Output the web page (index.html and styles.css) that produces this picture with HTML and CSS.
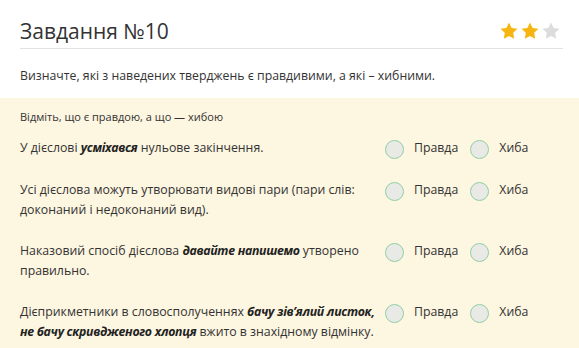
FILE: index.html
```html
<!DOCTYPE html>
<html lang="uk">
<head>
  <meta charset="UTF-8" />
  <title>Завдання №10</title>
  <link rel="stylesheet" href="styles.css">
</head>
<body>
  <div class="task-head">
    <h2>Завдання №10</h2>
    <div class="stars">
      <svg viewBox="0 0 20 20"><path class="on" d="M10 1.5l2.6 5.4 5.9.8-4.3 4.1 1 5.9L10 14.9l-5.2 2.8 1-5.9L1.5 7.7l5.9-.8z"/></svg>
      <svg viewBox="0 0 20 20"><path class="on" d="M10 1.5l2.6 5.4 5.9.8-4.3 4.1 1 5.9L10 14.9l-5.2 2.8 1-5.9L1.5 7.7l5.9-.8z"/></svg>
      <svg viewBox="0 0 20 20"><path class="off" d="M10 1.5l2.6 5.4 5.9.8-4.3 4.1 1 5.9L10 14.9l-5.2 2.8 1-5.9L1.5 7.7l5.9-.8z"/></svg>
    </div>
  </div>

  <p class="task-text">Визначте, які з наведених тверджень є правдивими, а які – хибними.</p>

  <div class="panel">
    <div class="hint">Відміть, що є правдою, а що — хибою</div>

    <div class="row">
      <div class="statement">У дієслові <em>усміхався</em> нульове закінчення.</div>
      <div class="choices">
        <label class="choice"><span class="radio"></span>Правда</label>
        <label class="choice"><span class="radio"></span>Хиба</label>
      </div>
    </div>

    <div class="row">
      <div class="statement">Усі дієслова можуть утворювати видові пари (пари слів: доконаний і недоконаний вид).</div>
      <div class="choices">
        <label class="choice"><span class="radio"></span>Правда</label>
        <label class="choice"><span class="radio"></span>Хиба</label>
      </div>
    </div>

    <div class="row">
      <div class="statement">Наказовий спосіб дієслова <em>давайте напишемо</em> утворено правильно.</div>
      <div class="choices">
        <label class="choice"><span class="radio"></span>Правда</label>
        <label class="choice"><span class="radio"></span>Хиба</label>
      </div>
    </div>

    <div class="row">
      <div class="statement">Дієприкметники в словосполученнях <em>бачу зів’ялий листок, не бачу скривдженого хлопця</em> вжито в знахідному відмінку.</div>
      <div class="choices">
        <label class="choice"><span class="radio"></span>Правда</label>
        <label class="choice"><span class="radio"></span>Хиба</label>
      </div>
    </div>
  </div>
</body>
</html>
```

FILE: styles.css
```css
body {
  margin: 0;
  background-color: #fff;
  font-family: 'Open Sans', sans-serif;
  color: #333;
}
.task-head {
  display: flex;
  align-items: center;
  justify-content: space-between;
  margin: 0 16px 0 20px;
  padding: 16px 0 2px;
  border-bottom: 1px solid #e2e2e2;
}
h2 {
  margin: 0;
  font-size: 21px;
  font-weight: normal;
  line-height: 30px;
}
.stars {
  display: flex;
  gap: 1px;
  margin-right: 2px;
}
.stars svg {
  width: 20px;
  height: 20px;
}
.stars .on {
  fill: #f6b511;
}
.stars .off {
  fill: #dcdcdc;
}
.task-text {
  margin: 17px 20px 12px;
  font-size: 12.3px;
  line-height: 20px;
}
.panel {
  background-color: #fdf6e0;
  padding: 11px 20px 20px;
  min-height: 240px;
}
.hint {
  font-size: 11px;
  line-height: 16px;
  margin-bottom: 13px;
}
.row {
  display: flex;
  align-items: flex-start;
  padding-bottom: 21px;
}
.statement {
  width: 365px;
  font-size: 12.3px;
  line-height: 20px;
}
.statement em {
  font-weight: bold;
  color: #222;
  letter-spacing: -0.3px;
}
.choices {
  display: flex;
  gap: 12px;
  font-size: 12.3px;
  line-height: 20px;
}
.choice {
  display: flex;
  align-items: flex-start;
}
.radio {
  width: 17px;
  height: 17px;
  margin: 2px 10px 0 0;
  border: 1px solid #8fcfa6;
  border-radius: 50%;
  background-color: #e9e9e6;
}
```
